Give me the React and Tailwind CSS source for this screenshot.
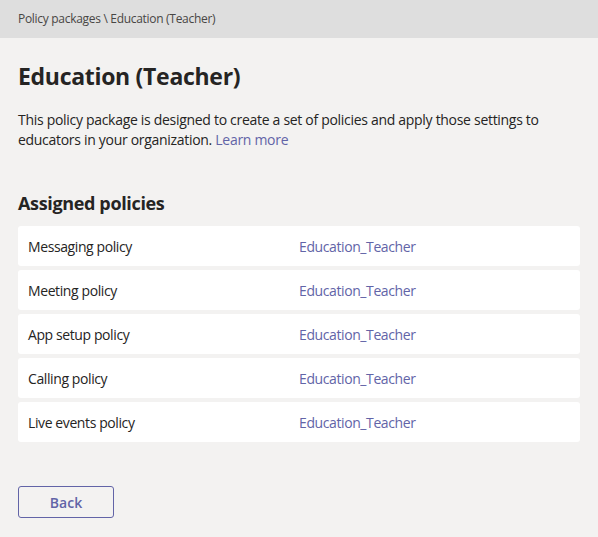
const policies = [
  { name: 'Messaging policy', value: 'Education_Teacher' },
  { name: 'Meeting policy', value: 'Education_Teacher' },
  { name: 'App setup policy', value: 'Education_Teacher' },
  { name: 'Calling policy', value: 'Education_Teacher' },
  { name: 'Live events policy', value: 'Education_Teacher' },
];

export default function App() {
  return (
    <div className="min-h-[537px] bg-[#f3f2f1] text-[#252423] font-['Open_Sans',sans-serif]">
      <div className="h-[38px] bg-[#dedede] px-[18px] flex items-center">
        <span className="text-[12px] text-[#484644] tracking-[-0.3px]">
          Policy packages \ Education (Teacher)
        </span>
      </div>

      <main className="px-[18px] pt-[22px]">
        <h1 className="text-[23px] font-bold leading-[32px] m-0 tracking-[-0.3px]">
          Education (Teacher)
        </h1>
        <p className="mt-[18px] text-[14px] leading-[20px] tracking-[-0.3px] pr-[20px]">
          This policy package is designed to create a set of policies and apply those settings to
          educators in your organization.{' '}
          <a href="#" className="text-[#6264a7]">
            Learn more
          </a>
        </p>

        <h2 className="mt-[41px] text-[18px] font-bold leading-[24px] tracking-[-0.35px]">
          Assigned policies
        </h2>
        <ul className="list-none m-0 p-0 mt-[11px] flex flex-col gap-[4px]">
          {policies.map((p) => (
            <li
              key={p.name}
              className="h-[40px] bg-white rounded-[3px] flex items-center text-[14px] tracking-[-0.4px]"
            >
              <span className="w-[281px] pl-[10px]">{p.name}</span>
              <span className="text-[#6264a7]">{p.value}</span>
            </li>
          ))}
        </ul>

        <button
          type="button"
          className="mt-[44px] w-[96px] h-[32px] border border-[#6264a7] rounded-[3px] bg-transparent text-[14px] font-semibold text-[#6264a7]"
        >
          Back
        </button>
      </main>
    </div>
  );
}
